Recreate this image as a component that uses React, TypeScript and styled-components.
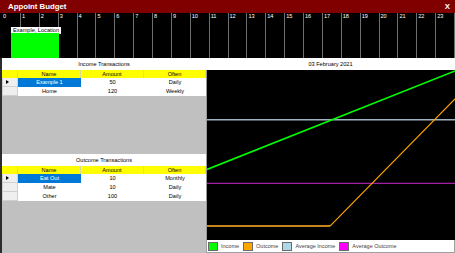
import { Fragment } from "react";
import styled, { createGlobalStyle } from "styled-components";

const GlobalStyle = createGlobalStyle`
    html, body {
        margin: 0;
        padding: 0;
        overflow: hidden;
        background: #c0c0c0;
    }
    * {
        box-sizing: border-box;
    }
`;

const Window = styled.div`
    width: 455px;
    height: 253px;
    display: flex;
    flex-direction: column;
    font-family: "Liberation Sans", Arial, sans-serif;
    background: #c0c0c0;
    overflow: hidden;
`;

const TitleBar = styled.div`
    height: 13px;
    background: #800000;
    color: #ffffff;
    display: flex;
    align-items: center;
    justify-content: space-between;
    padding: 0 5px 0 8px;
    font-weight: bold;
    font-size: 7.8px;
`;

const Close = styled.span`
    font-size: 7.8px;
`;

const Timeline = styled.div`
    position: relative;
    height: 45px;
    background: #000000;
    display: grid;
    grid-template-columns: repeat(24, 1fr);
    padding-left: 2px;
`;

const Hour = styled.div`
    border-right: 1px solid #6e6e6e;
    color: #ffffff;
    font-size: 5.6px;
    line-height: 7px;
    padding-left: 1px;
`;

const EventLabel = styled.div`
    position: absolute;
    left: 11px;
    top: 14px;
    width: 50px;
    height: 7px;
    background: #ffffff;
    color: #000000;
    font-size: 5.6px;
    line-height: 7px;
    padding-left: 2px;
    white-space: nowrap;
`;

const EventBlock = styled.div`
    position: absolute;
    left: 11px;
    top: 20px;
    width: 48px;
    height: 25px;
    background: #00ff00;
`;

const Main = styled.div`
    flex: 1;
    display: grid;
    grid-template-columns: 204px 1fr;
    border-left: 2px solid #2c2c2c;
    min-height: 0;
`;

const LeftPane = styled.div`
    display: grid;
    grid-template-rows: 96px 1fr;
    min-height: 0;
`;

const Section = styled.div`
    display: flex;
    flex-direction: column;
    background: #c0c0c0;
    overflow: hidden;
`;

const Caption = styled.div`
    height: 12px;
    flex: 0 0 12px;
    background: #ffffff;
    color: #000000;
    font-size: 5.6px;
    line-height: 12px;
    text-align: center;
`;

const Grid = styled.div`
    display: grid;
    grid-template-columns: 16px 63px 63px 1fr;
    font-size: 5.6px;
`;

const HeadCell = styled.div`
    height: 8px;
    line-height: 8px;
    background: #ffff00;
    text-align: center;
    color: #000000;
    border-right: 1px solid #d8d8a0;
`;

const RowHead = styled.div<{ $current?: boolean }>`
    height: 9px;
    background: #efefef;
    border: 1px solid #d0d0d0;
    border-top: none;
    position: relative;
    &::after {
        content: ${(p) => (p.$current ? '""' : "none")};
        position: absolute;
        left: 3px;
        top: 2px;
        border-left: 3px solid #000000;
        border-top: 2px solid transparent;
        border-bottom: 2px solid transparent;
    }
`;

const Cell = styled.div<{ $selected?: boolean }>`
    height: 9px;
    line-height: 9px;
    text-align: center;
    background: ${(p) => (p.$selected ? "#0078d7" : "#ffffff")};
    color: ${(p) => (p.$selected ? "#ffffff" : "#000000")};
    white-space: nowrap;
`;

const RightPane = styled.div`
    display: flex;
    flex-direction: column;
    min-height: 0;
`;

const Chart = styled.div`
    flex: 1;
    background: #000000;
    border-left: 1px solid #9a9a9a;
    min-height: 0;
`;

const Legend = styled.div`
    height: 13px;
    background: #ffffff;
    border: 1px solid #a0a0a0;
    border-top: none;
    display: flex;
    align-items: center;
    gap: 4px;
    padding-left: 1px;
    font-size: 5.5px;
    color: #444444;
`;

const LegendItem = styled.div`
    display: flex;
    align-items: center;
    gap: 3px;
`;

const Swatch = styled.span<{ $color: string }>`
    width: 10px;
    height: 9px;
    background: ${(p) => p.$color};
    border: 1px solid #6a6a6a;
`;

type Row = { name: string; amount: string; often: string };

const income: Row[] = [
    { name: "Example 1", amount: "50", often: "Daily" },
    { name: "Home", amount: "120", often: "Weekly" },
];

const outcome: Row[] = [
    { name: "Eat Out", amount: "10", often: "Monthly" },
    { name: "Mate", amount: "10", often: "Daily" },
    { name: "Other", amount: "100", often: "Daily" },
];

const Table = ({ title, rows }: { title: string; rows: Row[] }) => (
    <Section>
        <Caption>{title}</Caption>
        <Grid>
            <HeadCell />
            <HeadCell>Name</HeadCell>
            <HeadCell>Amount</HeadCell>
            <HeadCell>Often</HeadCell>
            {rows.map((r, i) => (
                <Fragment key={r.name}>
                    <RowHead $current={i === 0} />
                    <Cell $selected={i === 0}>{r.name}</Cell>
                    <Cell>{r.amount}</Cell>
                    <Cell>{r.often}</Cell>
                </Fragment>
            ))}
        </Grid>
    </Section>
);

const App = () => {
    const hours = Array.from({ length: 24 }, (_, i) => i);
    return (
        <Window>
            <GlobalStyle />
            <TitleBar>
                <span>Appoint Budget</span>
                <Close>X</Close>
            </TitleBar>
            <Timeline>
                {hours.map((h) => (
                    <Hour key={h}>{h}</Hour>
                ))}
                <EventLabel>Example, Location</EventLabel>
                <EventBlock />
            </Timeline>
            <Main>
                <LeftPane>
                    <Table title="Income Transactions" rows={income} />
                    <Table title="Outcome Transactions" rows={outcome} />
                </LeftPane>
                <RightPane>
                    <Caption>03 February 2021</Caption>
                    <Chart>
                        <svg width="100%" height="100%" viewBox="0 0 248 171" preserveAspectRatio="none">
                            <line x1="0" y1="50" x2="248" y2="50" stroke="#9fb3c2" strokeWidth="1.5" />
                            <line x1="0" y1="114" x2="248" y2="114" stroke="#a020a0" strokeWidth="1.2" />
                            <line x1="0" y1="157" x2="123" y2="157" stroke="#c8841c" strokeWidth="2" />
                            <line x1="123" y1="157" x2="248" y2="29" stroke="#ffa500" strokeWidth="1.2" />
                            <line x1="0" y1="100" x2="248" y2="1" stroke="#00ff00" strokeWidth="1.6" />
                        </svg>
                    </Chart>
                    <Legend>
                        <LegendItem><Swatch $color="#00ff00" />Income</LegendItem>
                        <LegendItem><Swatch $color="#ffa500" />Outcome</LegendItem>
                        <LegendItem><Swatch $color="#add8e6" />Average Income</LegendItem>
                        <LegendItem><Swatch $color="#ff00ff" />Average Outcome</LegendItem>
                    </Legend>
                </RightPane>
            </Main>
        </Window>
    );
};

export default App;
